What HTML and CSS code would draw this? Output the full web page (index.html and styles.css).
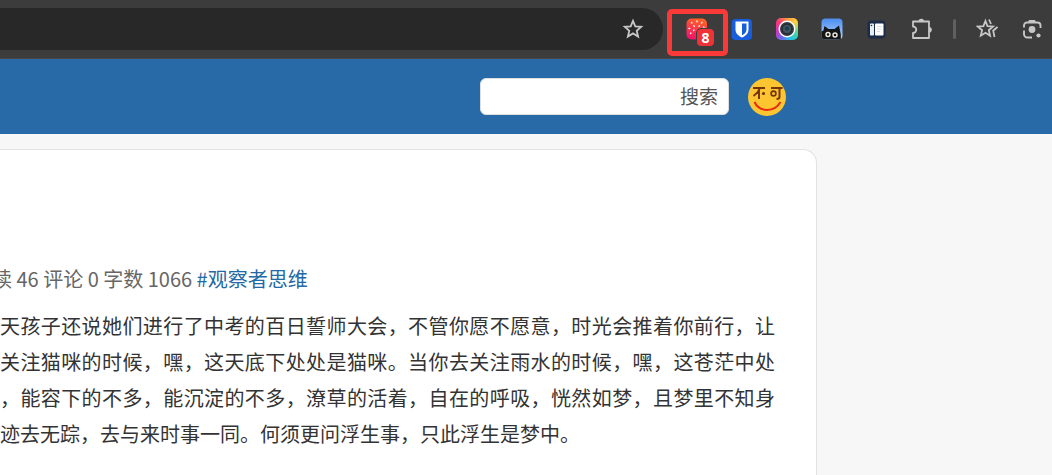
FILE: index.html
```
<!DOCTYPE html>
<html lang="zh-CN">
<head>
    <meta charset="UTF-8">
    <meta name="viewport" content="width=device-width, initial-scale=1.0">
    <title>观察者思维</title>
    <link rel="stylesheet" href="styles.css">
</head>
<body>
    <div class="toolbar">
        <div class="address">
            <button class="tool" aria-label="Bookmark">
                <svg viewBox="0 0 22 22"><path d="M11 2.8l2.3 5.500 5.900.5-4.500 3.900 1.400 5.800-5.100-3.100-5.100 3.100 1.400-5.800-4.500-3.900 5.900-.5z" fill="none" stroke="#c7c7c7" stroke-width="1.800"/></svg>
            </button>
        </div>
        <button class="tool marked" aria-label="RSS">
            <svg viewBox="0 0 22 22">
                <defs><linearGradient id="berry" x1="0.6" y1="0" x2="0.3" y2="1"><stop offset="0" stop-color="#ff6426"/><stop offset="1" stop-color="#f5106b"/></linearGradient></defs>
                <rect x="0.5" y="0.5" width="20.5" height="21" rx="5" fill="url(#berry)"/>
                <path d="M5.500 4.500l.5.600M11 3v.8M16 4.500l-.5.600M3 10.500h.8M7.800 7.800l.5.500M13.500 7.800l-.5.500M7.500 12.500l.5-.5M4.500 15.500l.5-.5M17.500 9l.5.500" stroke="#fff" stroke-width="1.300" stroke-linecap="round"/>
            </svg>
            <span class="badge">8</span>
        </button>
        <button class="tool" aria-label="Bitwarden">
            <svg viewBox="0 0 22 22">
                <rect x="0.5" y="1" width="20.5" height="21" rx="4" fill="#175ddc"/>
                <path d="M4.500 3.500h13v8c0 4-3 6.500-6.500 8-3.500-1.500-6.500-4-6.500-8z" fill="#fff"/>
                <path d="M11 5.500h4.500v6c0 2.700-2 4.500-4.500 5.800z" fill="#175ddc"/>
            </svg>
        </button>
        <button class="tool" aria-label="Camera">
            <span class="rainbow">
                <svg viewBox="0 0 22 22">
                    <circle cx="11" cy="11" r="8.500" fill="#fff"/>
                    <circle cx="11" cy="11" r="7" fill="#303840"/>
                    <circle cx="11" cy="11" r="4.800" fill="#43515c" stroke="#20272d"/>
                    <circle cx="11" cy="10.500" r="2" fill="#193e50"/>
                </svg>
            </span>
        </button>
        <button class="tool" aria-label="Cat">
            <svg viewBox="0 0 22 22">
                <defs><linearGradient id="sky" x1="0" y1="0" x2="0" y2="1"><stop offset="0" stop-color="#4b8df0"/><stop offset="1" stop-color="#b2d3fb"/></linearGradient></defs>
                <rect x="0.5" y="0.5" width="21" height="21" rx="4" fill="url(#sky)"/>
                <path d="M.5 13.500l2-1L3.500 8l4 3h6l4.500-3.500 1 5 .8 4v5H4.500a4 4 0 0 1-4-4z" fill="#131517"/>
                <circle cx="7" cy="16.500" r="2" fill="#111" stroke="#f2ede2" stroke-width="1.400"/>
                <circle cx="14" cy="17" r="2" fill="#111" stroke="#f2ede2" stroke-width="1.400"/>
            </svg>
        </button>
        <button class="tool" aria-label="Side tabs">
            <svg viewBox="0 0 22 22">
                <rect x="1.5" y="2.500" width="18" height="18" rx="4" fill="#1c2b48"/>
                <rect x="4" y="5.500" width="4" height="12" rx="0.8" fill="#e5edf5"/>
                <rect x="9" y="5.500" width="8.500" height="12" rx="0.8" fill="#fff"/>
                <path d="M11 8.500h4.500M11 11h4.500M11 13.500h3" stroke="#d5dce4"/>
                <circle cx="5.500" cy="7.500" r="0.8" fill="#1c2b48"/>
            </svg>
        </button>
        <button class="tool" aria-label="Extensions">
            <svg viewBox="0 0 22 22"><path d="M2 3.500H18V20H2v-5a3 3 0 0 0 0-6.500z" fill="none" stroke="#c7c7c7" stroke-width="1.800" stroke-linejoin="round"/><path d="M7.500 3.500a2.800 2.800 0 0 1 5.600 0zM18 9a2.800 2.800 0 0 1 0 5.600z" fill="#c7c7c7"/></svg>
        </button>
        <span class="separator"></span>
        <button class="tool" aria-label="Favorites">
            <svg viewBox="0 0 22 22"><path d="M9.500 3l2 5.200 5.500.4-4.200 3.600 1.300 5.500-4.600-2.900-4.700 2.900 1.300-5.500-4.200-3.600 5.500-.4zM13 1.500l2 4.500M21.500 9l-4.300 3.700 1.300 6.300" fill="none" stroke="#c7c7c7" stroke-width="1.800"/></svg>
        </button>
        <button class="tool" aria-label="Lens">
            <svg viewBox="0 0 22 22"><path d="M3 9.500V7.500a3 3 0 0 1 3-3h10.500a3 3 0 0 1 3 3v2.500M3 12.500V16a3.500 3.500 0 0 0 3.500 3.500h4.500" fill="none" stroke="#c7c7c7" stroke-width="1.900"/><path d="M7 4.500l1-2.500h6l1 2.500z" fill="#c7c7c7"/><circle cx="11" cy="11.500" r="3.400" fill="#c7c7c7"/><circle cx="17.500" cy="17.500" r="2.100" fill="#c7c7c7"/></svg>
        </button>
    </div>

    <header class="header">
        <form class="search">
            <input type="text" class="search-input" aria-label="搜索">
            <button type="button" class="search-button">搜索</button>
        </form>
        <a href="#" class="avatar" aria-label="不可">
            <svg viewBox="0 0 38 38">
                <circle cx="19" cy="19" r="19" fill="#fdc52f"/>
                <path d="M5 10h12M12 10q-2 5-6.500 8M11 12v9M23 10h11.500M31.500 10v9q0 2-3 2" fill="none" stroke="#76360b" stroke-width="2"/>
                <circle cx="15.500" cy="15.500" r="1.600" fill="#76360b"/>
                <circle cx="25.500" cy="15.500" r="2.400" fill="none" stroke="#76360b" stroke-width="1.700"/>
                <path d="M6.500 24c5 10.500 20 10.500 26 0" fill="none" stroke="#e62b12" stroke-width="2"/>
            </svg>
        </a>
    </header>

    <main class="card">
        <div class="meta">读 46 评论 0 字数 1066 <a href="#">#观察者思维</a></div>
        <p class="content">天孩子还说她们进行了中考的百日誓师大会，不管你愿不愿意，时光会推着你前行，让关注猫咪的时候，嘿，这天底下处处是猫咪。当你去关注雨水的时候，嘿，这苍茫中处，能容下的不多，能沉淀的不多，潦草的活着，自在的呼吸，恍然如梦，且梦里不知身迹去无踪，去与来时事一同。何须更问浮生事，只此浮生是梦中。</p>
    </main>
</body>
</html>
```
FILE: styles.css
```
*,
*::after {
    box-sizing: border-box;
}

body {
    margin: 0;
    min-height: 100vh;
    display: flex;
    flex-direction: column;
    background-color: #f7f7f7;
    font-family: "Noto Sans CJK SC", sans-serif;
    overflow: hidden;
}

button {
    padding: 0;
    border: none;
    background: none;
    font-family: inherit;
    cursor: pointer;
}

/* browser bar */
.toolbar {
    display: flex;
    align-items: center;
    gap: 23px;
    height: 59px;
    padding-right: 9px;
    background-color: #3c3c3c;
    border-bottom: 1px solid #4a4644;
}

.address {
    flex: 1;
    display: flex;
    align-items: center;
    justify-content: flex-end;
    height: 42px;
    padding-right: 19px;
    background-color: #282828;
    border-radius: 0 21px 21px 0;
}

.tool {
    position: relative;
    flex: none;
    width: 22px;
    height: 22px;
}

.tool svg {
    display: block;
    width: 22px;
    height: 22px;
}

.marked::after {
    content: "";
    position: absolute;
    left: -19px;
    top: -9px;
    width: 61px;
    height: 47px;
    border: 5px solid #fa3939;
    border-radius: 5px;
}

.badge {
    position: absolute;
    left: 10px;
    top: 10px;
    width: 19px;
    height: 19px;
    border: 1px solid #3c3c3c;
    border-radius: 5px;
    background-color: #ee3338;
    color: white;
    font: bold 14px/17px "Open Sans", sans-serif;
    text-align: center;
}

.rainbow {
    display: block;
    border-radius: 5px;
    background: conic-gradient(#ff963c, #ffd13c, #58d68a, #1ccbe0, #6270ef, #d530c6, #ff3577, #ff963c);
}

.separator {
    width: 3px;
    height: 20px;
    margin: 0 -3px;
    background-color: #606060;
    border-radius: 2px;
}

/* site header */
.header {
    display: flex;
    align-items: center;
    justify-content: flex-end;
    gap: 19px;
    height: 75px;
    padding-right: 266px;
    background-color: #286aa8;
}

.search {
    display: flex;
    width: 249px;
    height: 37px;
    background-color: white;
    border: 1px solid #dedede;
    border-radius: 6px;
}

.search-input {
    flex: 1;
    min-width: 0;
    padding: 0 10px;
    border: none;
    outline: none;
    background: none;
    font-size: 19px;
}

.search-button {
    padding: 0 10px 2px;
    color: #555;
    font-size: 19px;
    line-height: 28px;
}

.avatar {
    width: 38px;
    height: 38px;
}

.avatar svg {
    display: block;
}

/* article */
.card {
    flex: 1;
    margin: 15px 235px 0 0;
    padding: 111px 41px 24px 0;
    background-color: white;
    border: 1px solid #e2e2e2;
    border-width: 1px 1px 0 0;
    border-radius: 0 14px 0 0;
}

.meta {
    margin-left: -8px;
    color: #666;
    font-size: 20px;
    line-height: 36px;
}

.meta a {
    color: #2468a4;
    text-decoration: none;
}

.content {
    margin: 11px 0 0;
    color: #333;
    font-size: 20px;
    line-height: 36px;
    text-align: justify;
    line-break: anywhere;
}
```
